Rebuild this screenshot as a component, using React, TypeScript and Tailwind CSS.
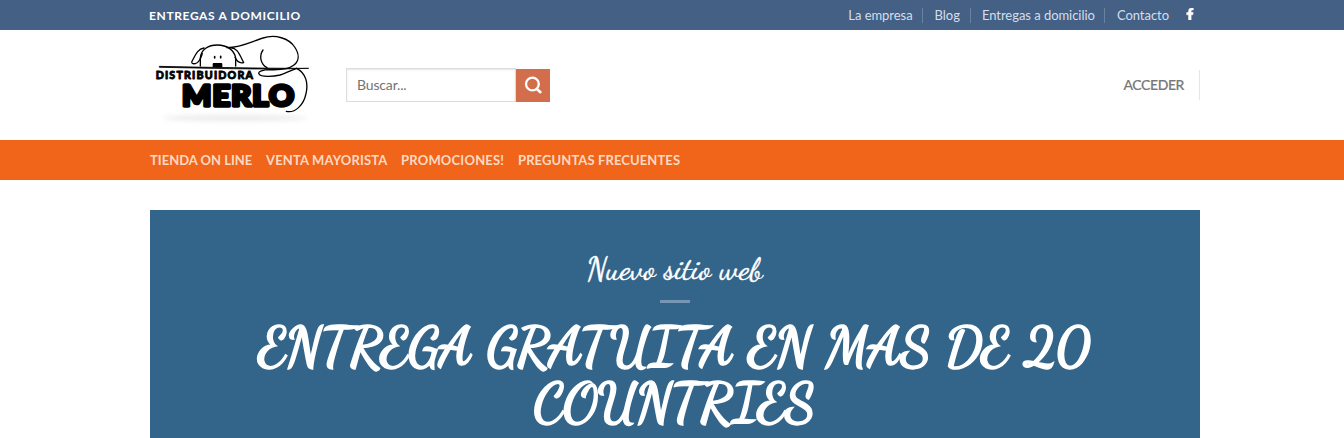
import React from "react";
import { FaFacebookF } from "react-icons/fa";

function Logo() {
  return (
    <svg viewBox="0 0 525 315" className="h-[105px] w-[175px]" fill="none" stroke="#000" strokeLinecap="round" strokeLinejoin="round" role="img" aria-label="Distribuidora Merlo">
      <defs>
        <filter id="soft" x="-20%" y="-200%" width="140%" height="500%">
          <feGaussianBlur stdDeviation="8" />
        </filter>
      </defs>
      <ellipse cx="270" cy="264" rx="218" ry="8" fill="#e9e9e9" stroke="none" filter="url(#soft)" />
      <g strokeWidth="4">
        <path d="M166 108 V84 C168 58 190 45 217 45 C247 45 268 61 272 84 V108" />
        <path d="M177 54 C157 57 151 76 141 94 C138 101 144 102 151 101 C161 99 168 84 172 71" />
        <path d="M253 54 C276 50 283 72 296 98 C283 101 275 94 270 82" />
        <path d="M246 53 C290 52 323 33 354 24 C391 12 432 25 449 51 C465 75 461 94 447 105 C430 119 402 120 375 119 C354 119 338 124 342 132 C347 142 386 140 405 135 C424 129 441 120 455 115" />
        <path d="M354 60 C342 77 346 102 366 113" />
        <path d="M455 115 C484 130 490 161 483 191 C476 226 450 250 424 244" />
      </g>
      <path d="M44 109 C180 112 350 115 491 115 C350 120 180 114 44 112Z" fill="#000" strokeWidth="2.4" />
      <path d="M204 99 H229 Q232 99 232 103 V112 H203 V103 Q203 99 206 99Z" fill="#000" stroke="none" />
      <path d="M209 80 V84 M227 79 V83" strokeWidth="5" />
      <text x="32" y="148" textLength="292" lengthAdjust="spacing" fontFamily="Lato, sans-serif" fontWeight="900" fontSize="32" fill="#000" strokeWidth="2.4">DISTRIBUIDORA</text>
      <text x="111" y="227" textLength="339" lengthAdjust="spacingAndGlyphs" fontFamily="Lato, sans-serif" fontWeight="900" fontSize="84" letterSpacing="3" fill="#000" strokeWidth="10">MERLO</text>
    </svg>
  );
}

export default function App() {
  return (
    <div className="h-[438px] overflow-hidden bg-white font-['Lato',sans-serif]">
      <div className="h-[30px] bg-[#446084]">
        <div className="ml-[150px] flex h-full w-[1050px] items-center justify-between">
          <strong className="ml-[-1px] pt-[2px] text-[12px] leading-[28px] tracking-[0.62px] text-white">ENTREGAS A DOMICILIO</strong>
          <nav className="flex items-center text-[13px] tracking-[-0.04px] text-[#d5deea]">
            <a className="leading-[15px]">La empresa</a>
            <a className="ml-[9px] border-l border-[#6a81a0] pl-[12px] leading-[15px]">Blog</a>
            <a className="ml-[10px] border-l border-[#6a81a0] pl-[11px] leading-[15px]">Entregas a domicilio</a>
            <a className="ml-[9px] border-l border-[#6a81a0] pl-[12px] leading-[15px]">Contacto</a>
            <FaFacebookF className="mr-[5px] mb-[2px] ml-[16px] h-[12px] w-[10px] text-white" stroke="#fff" strokeWidth="30" />
          </nav>
        </div>
      </div>

      <header className="ml-[145px] flex h-[110px] w-[1055px] items-start">
        <Logo />
        <form className="mt-[38px] ml-[26px] flex h-[34px] w-[204px]">
          <input className="h-[34px] w-[170px] border border-[#ddd] px-[10px] pb-[2px] text-[14px] tracking-[-0.15px] shadow-[inset_0_1px_2px_rgba(0,0,0,0.1)] outline-none placeholder:text-[#737373]" placeholder="Buscar..." />
          <button type="button" aria-label="Buscar" className="mt-px flex h-[33px] w-[34px] items-center justify-center bg-[#d26e4b]">
            <svg viewBox="0 0 18 18" className="mb-[2px] h-[18px] w-[18px]" fill="none" stroke="#fff">
              <circle cx="8.4" cy="8" r="6.4" strokeWidth="2.3" />
              <path d="M12.8 13 L16.2 16" strokeWidth="2.8" strokeLinecap="round" />
            </svg>
          </button>
        </form>
        <a className="mt-[40px] ml-auto h-[30px] border-r border-[#e5e5e5] pr-[15px] text-[14px] leading-[30px] font-medium tracking-[-0.4px] text-[#777] [-webkit-text-stroke:0.15px_#777]">ACCEDER</a>
      </header>

      <nav className="h-[40px] bg-[#f1651a]">
        <div className="ml-[150px] flex h-full w-[1050px] items-center gap-[14px] pt-px text-[13px] font-bold text-[#fcd9c2]">
          <a className="w-[102px] whitespace-nowrap">TIENDA ON LINE</a>
          <a className="w-[121px] tracking-[0.16px] whitespace-nowrap">VENTA MAYORISTA</a>
          <a className="w-[103px] tracking-[0.2px] whitespace-nowrap">PROMOCIONES!</a>
          <a className="tracking-[0.1px] whitespace-nowrap">PREGUNTAS FRECUENTES</a>
        </div>
      </nav>

      <section className="mt-[30px] ml-[150px] flex h-[228px] w-[1050px] flex-col items-center bg-[#33658a] text-white">
        <p className="mt-[40px] mr-px h-[38px] font-['Dancing_Script',cursive] text-[32px] leading-[38px] whitespace-nowrap [-webkit-text-stroke:0.4px_#fff]">Nuevo sitio web</p>
        <div className="mt-[12px] h-[3px] w-[30px] bg-[#7796b3]" />
        <h1 className="mt-[16px] mr-[3px] text-center font-['Dancing_Script',cursive] text-[54px] leading-[56px] font-bold tracking-[-1.1px] [word-spacing:2.2px] whitespace-nowrap [-webkit-text-stroke:1.4px_#fff]">
          ENTREGA GRATUITA EN MAS DE 20
          <br />
          COUNTRIES
        </h1>
      </section>
    </div>
  );
}
